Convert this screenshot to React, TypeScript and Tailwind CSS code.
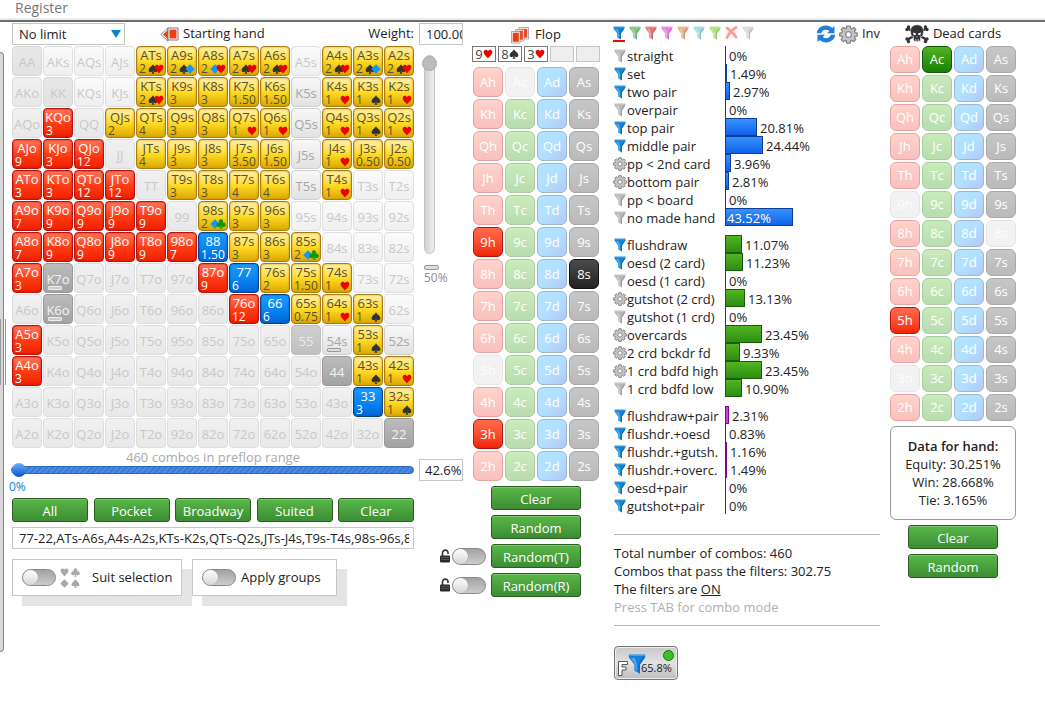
import { useState } from "react";
import type { ReactNode } from "react";

const ranks = "AKQJT98765432".split("");

// hand -> combos left, followed by the suits that are still allowed
const range: Record<string, string> = {
  ATs: "2 sh", A9s: "2 sd", A8s: "2 dh", A7s: "2 sh", A6s: "2 sh", A4s: "2 sh", A3s: "2 sd", A2s: "2 sh",
  KTs: "2 sh", K9s: "3", K8s: "3", K7s: "1.50", K6s: "1.50", K4s: "1 h", K3s: "1 s", K2s: "1 h",
  KQo: "3", QJs: "2", QTs: "4", Q9s: "3", Q8s: "3", Q7s: "1 h", Q6s: "1 h", Q4s: "1 h", Q3s: "1 s", Q2s: "1 h",
  AJo: "9", KJo: "3", QJo: "12", JTs: "4", J9s: "3", J8s: "3", J7s: "3.50", J6s: "1.50", J4s: "1 h", J3s: "0.50", J2s: "0.50",
  ATo: "3", KTo: "3", QTo: "12", JTo: "12", T9s: "3", T8s: "3", T7s: "4", T6s: "4", T4s: "1 h",
  A9o: "7", K9o: "9", Q9o: "9", J9o: "9", T9o: "9", "98s": "2 dc", "97s": "3", "96s": "3",
  A8o: "7", K8o: "9", Q8o: "9", J8o: "9", T8o: "9", "98o": "7", "88": "1.50", "87s": "3", "86s": "3", "85s": "2 dc",
  A7o: "3", "87o": "9", "77": "6", "76s": "2", "75s": "1.50", "74s": "1 h",
  "76o": "12", "66": "6", "65s": "0.75", "64s": "1 h", "63s": "1 s",
  A5o: "3", "53s": "1 s", A4o: "3", "43s": "1 s", "42s": "1 h", "33": "3", "32s": "1 s",
};

const muted = "border-[#dcdcdc] bg-linear-to-b from-[#f1f1f1] to-[#e8e8e8] text-[#c8c8c8]";
const mutedSuited = "border-[#dedede] bg-linear-to-b from-[#fbfbfb] to-[#efefef] text-[#c8c8c8]";
const mid = "border-[#cfcfcf] bg-linear-to-b from-[#f8f8f8] to-[#e2e2e2] text-[#a6a6a6]";
const dark = "border-[#999] bg-linear-to-b from-[#bcbcbc] to-[#a3a3a3] text-[#f4f4f4]";

const special: Record<string, string> = {
  AA: "border-[#d6d6d6] bg-linear-to-b from-[#e8e8e8] to-[#e2e2e2] text-[#c8c8c8]",
  KK: "border-[#d6d6d6] bg-linear-to-b from-[#e8e8e8] to-[#e2e2e2] text-[#c8c8c8]",
  A5s: mutedSuited, K5s: mid, Q5s: mid, J5s: mid, T5s: mid, "54s": mid, "52s": mid,
  K7o: dark, K6o: dark, "44": dark, "22": dark,
  "55": "border-[#bdbdbd] bg-linear-to-b from-[#cfcfcf] to-[#c0c0c0] text-[#ececec]",
};

const yellow =
  "border-[#a97c14] bg-linear-to-b from-[#fff0a4] via-[#ffdc22] to-[#dca800] text-[#55502e] shadow-[inset_0_0_2px_#c98f00]";
const red = "border-[#b51414] bg-linear-to-b from-[#ff7459] via-[#ff3c14] to-[#f01e00] text-white shadow-[inset_0_0_2px_#d01000]";
const blue = "border-[#06427f] bg-linear-to-b from-[#1a9cff] via-[#0b86f4] to-[#0066d6] text-white shadow-[inset_0_0_2px_#0050a8]";

const suitPaths: Record<string, string> = {
  h: "M8 15C6 12 1 9 1 4.800C1 2.500 2.500 1 4.500 1C6.200 1 7.500 2 8 3.500C8.500 2 9.800 1 11.500 1C13.500 1 15 2.500 15 4.800C15 9 10 12 8 15Z",
  s: "M8 .5C9.500 3.500 15 6.500 15 10C15 12 13.500 13 12 13C10.800 13 9.600 12.500 9 11.500C9 13.500 9.500 15 11 15.500H5C6.500 15 7 13.500 7 11.500C6.400 12.500 5.200 13 4 13C2.500 13 1 12 1 10C1 6.500 6.500 3.500 8 .5Z",
  d: "M8 .5L15.500 8L8 15.500L.5 8Z",
  c: "M8 .5A3.400 3.400 0 0 1 10.600 6.200A3.500 3.500 0 1 1 9 11C9 13.500 9.500 15 11 15.500H5C6.500 15 7 13.500 7 11A3.500 3.500 0 1 1 5.400 6.200A3.400 3.400 0 0 1 8 .5Z",
};
const suitColors: Record<string, string> = {
  h: "fill-[#ee0000]",
  s: "fill-[#333]",
  d: "fill-[#1496ff]",
  c: "fill-[#0a9a0a]",
};

const Suit = ({ suit, className }: { suit: string; className?: string }) => (
  <svg viewBox="0 0 16 16" className={className ?? `size-2.5 shrink-0 ${suitColors[suit]}`}>
    <path d={suitPaths[suit]} />
  </svg>
);

const Funnel = ({ color, className = "h-3.5 w-3" }: { color: string; className?: string }) => (
  <svg viewBox="0 0 12 14" className={`shrink-0 ${className} ${color}`}>
    <path fill="currentColor" d="M.5 .5H11.500V2.500L8 7.500V13.500L4.300 11.500V7.500L.5 2.500Z" />
    <path fill="#fff" fillOpacity=".3" d="M.5 .5H11.500V1.500H.5ZM2 3H4.500L6 7V11.500L5 11V7.500Z" />
    <path fill="#000" fillOpacity=".14" d="M9.500 2.500H11.500L8 7.500V13.500L7 13V7Z" />
  </svg>
);

const Gear = ({ className = "size-[14px]" }: { className?: string }) => (
  <svg viewBox="0 0 20 20" className={`shrink-0 ${className}`}>
    <path
      fill="#c4c4c4"
      stroke="#7c7c7c"
      strokeWidth="1.200"
      strokeLinejoin="round"
      d="M8.200 1H11.800L12.200 3.500L13.600 4.100L15.700 2.600L17.800 4.900L16.300 6.800L16.800 8L19.200 8.400V11.600L16.800 12L16.300 13.300L17.700 15.300L15.400 17.600L13.400 16.200L12.200 16.700L11.800 19.200H8.200L7.800 16.700L6.600 16.200L4.500 17.600L2.300 15.300L3.700 13.300L3.200 12L.8 11.600V8.400L3.200 8L3.700 6.700L2.300 4.700L4.600 2.400L6.600 3.900L7.800 3.500Z"
    />
    <circle cx="10" cy="10" r="3" fill="#fff" stroke="#8c8c8c" strokeWidth="1.400" />
  </svg>
);

const Lock = () => (
  <svg viewBox="0 0 12 14" className="h-3.5 w-3 shrink-0">
    <path d="M2.500 7V4.200A2.600 2.600 0 0 1 8 3.600V5" fill="none" stroke="#333" strokeWidth="1.600" />
    <rect x="0" y="6.500" width="10" height="7" rx="1" fill="#2b2b2b" />
    <path d="M1 8.500H9M1 10.500H9" stroke="#666" strokeWidth=".7" />
  </svg>
);

const Skull = () => (
  <svg viewBox="0 0 24 20" className="h-5 w-6" fill="#333">
    <path d="M2 4L22 16M22 4L2 16" stroke="#333" strokeWidth="2.400" />
    <circle cx="2" cy="5.500" r="1.700" /><circle cx="3.500" cy="3" r="1.700" />
    <circle cx="22" cy="5.500" r="1.700" /><circle cx="20.500" cy="3" r="1.700" />
    <circle cx="2" cy="15" r="1.700" /><circle cx="3.500" cy="17.500" r="1.700" />
    <circle cx="22" cy="15" r="1.700" /><circle cx="20.500" cy="17.500" r="1.700" />
    <path d="M12 .8C16.500 .8 18.800 4 18.500 7.800C18.400 9.800 17.800 11 17.500 12.500H15.500V16.500C14 17.800 10 17.800 8.500 16.500V12.500H6.500C6.200 11 5.600 9.800 5.500 7.800C5.200 4 7.500 .8 12 .8Z" stroke="#fff" strokeWidth=".5" />
    <path d="M8 8.500L10.800 9.300V11L8.700 11.200ZM16 8.500L13.200 9.300V11L15.300 11.200ZM12 12L12.700 13.300H11.300Z" fill="#fff" />
    <path d="M10.500 15V17M12 15V17M13.500 15V17" stroke="#fff" strokeWidth=".5" />
  </svg>
);

const GreenButton = ({ children, className }: { children: ReactNode; className: string }) => (
  <button
    type="button"
    className={`h-6 rounded-[3px] border border-[#2b5c20] bg-linear-to-b from-[#58b848] to-[#3c8c34] pt-px text-center leading-5 text-white shadow-[inset_0_1px_0_#7cc86c] ${className}`}
  >
    {children}
  </button>
);

const Toggle = ({ label }: { label: string }) => (
  <input
    type="checkbox"
    aria-label={label}
    className="h-[17px] w-[34px] shrink-0 appearance-none rounded-full border border-[#888] bg-linear-to-b from-[#a2a2a2] to-[#cdcdcd] before:block before:size-[15px] before:rounded-full before:bg-linear-to-b before:from-white before:to-[#d6d6d6] before:shadow-[0_0_1px_#777] checked:before:ml-[17px]"
  />
);

const HandCell = ({ row, col }: { row: number; col: number }) => {
  const pair = row === col;
  const suited = col > row;
  const name = ranks[Math.min(row, col)] + ranks[Math.max(row, col)] + (pair ? "" : suited ? "s" : "o");
  const entry = range[name];

  if (!entry) {
    const mark = name === "K7o" || name === "K6o" || name === "54s";
    return (
      <button
        type="button"
        className={`relative h-[30px] rounded-[4px] border pt-0.5 text-center leading-4 ${special[name] ?? (suited ? mutedSuited : muted)}`}
      >
        {name}
        {mark && (
          <span className={`absolute bottom-0.5 left-1 h-1 w-3.5 rounded-[1px] border ${name === "54s" ? "border-[#999] bg-[#ddd]" : "border-[#eee] bg-[#ccc]"}`} />
        )}
      </button>
    );
  }

  const [count, suits = ""] = entry.split(" ");
  return (
    <button type="button" className={`h-[30px] rounded-[4px] border ${pair ? blue : suited ? yellow : red}`}>
      <span className="block text-center leading-4">{name}</span>
      <span className="flex h-3 items-center justify-between pr-px pl-[2px] text-xs leading-3">
        {count}
        {suits && (
          <span className="flex -space-x-1">
            {suits.split("").map((s) => (
              <Suit key={s} suit={s} />
            ))}
          </span>
        )}
      </span>
    </button>
  );
};

const cardColors: Record<string, string> = {
  h: "border-[#eaa3a3] bg-linear-to-b from-[#ffd3cc] to-[#f8c0bc] text-white",
  c: "border-[#a5cfa0] bg-linear-to-b from-[#c9ebb9] to-[#b9dcb0] text-white",
  d: "border-[#9bb9d2] bg-linear-to-br from-[#b2e4ff] via-[#b2e0ff] to-[#b3c8f4] text-white",
  s: "border-[#a8a8a8] bg-linear-to-b from-[#c6c6c6] to-[#bababa] text-white",
};
const cardPicked: Record<string, string> = {
  h: "border-[#b51414] bg-linear-to-b from-[#ff6a4c] to-[#f42200] text-white",
  c: "border-[#125a08] bg-linear-to-b from-[#52b420] to-[#158004] text-white",
  d: "border-[#06427f] bg-linear-to-b from-[#1a9cff] to-[#0066d6] text-white",
  s: "border-[#111] bg-linear-to-b from-[#4c4c4c] to-[#222] text-white",
};

type CardGridProps = { picked: string[]; blocked: string[]; compact?: boolean };

const CardGrid = ({ picked, blocked, compact }: CardGridProps) => (
  <div className="grid grid-cols-4 gap-0.5">
    {ranks.flatMap((rank) =>
      ["h", "c", "d", "s"].map((suit) => {
        const card = rank + suit;
        const look = picked.includes(card)
          ? cardPicked[suit]
          : blocked.includes(card)
            ? "border-[#e6e6e6] bg-[#f2f2f2] text-[#fdfdfd]"
            : cardColors[suit];
        return (
          <button key={card} type="button" className={`rounded-md border pt-px text-center ${compact ? "h-[27px]" : "h-[30px]"} ${look}`}>
            {card}
          </button>
        );
      }),
    )}
  </div>
);

type Stat = { name: string; value: string; icon: "on" | "off" | "gear" };

const made: Stat[] = [
  { name: "straight", value: "0", icon: "off" },
  { name: "set", value: "1.49", icon: "on" },
  { name: "two pair", value: "2.97", icon: "on" },
  { name: "overpair", value: "0", icon: "off" },
  { name: "top pair", value: "20.81", icon: "on" },
  { name: "middle pair", value: "24.44", icon: "on" },
  { name: "pp < 2nd card", value: "3.96", icon: "gear" },
  { name: "bottom pair", value: "2.81", icon: "gear" },
  { name: "pp < board", value: "0", icon: "off" },
  { name: "no made hand", value: "43.52", icon: "off" },
];
const draws: Stat[] = [
  { name: "flushdraw", value: "11.07", icon: "on" },
  { name: "oesd (2 card)", value: "11.23", icon: "on" },
  { name: "oesd (1 card)", value: "0", icon: "off" },
  { name: "gutshot (2 crd)", value: "13.13", icon: "gear" },
  { name: "gutshot (1 crd)", value: "0", icon: "off" },
  { name: "overcards", value: "23.45", icon: "gear" },
  { name: "2 crd bckdr fd", value: "9.33", icon: "gear" },
  { name: "1 crd bdfd high", value: "23.45", icon: "gear" },
  { name: "1 crd bdfd low", value: "10.90", icon: "off" },
];
const combined: Stat[] = [
  { name: "flushdraw+pair", value: "2.31", icon: "on" },
  { name: "flushdr.+oesd", value: "0.83", icon: "on" },
  { name: "flushdr.+gutsh.", value: "1.16", icon: "on" },
  { name: "flushdr.+overc.", value: "1.49", icon: "on" },
  { name: "oesd+pair", value: "0", icon: "on" },
  { name: "gutshot+pair", value: "0", icon: "on" },
];

const StatGroup = ({ stats, bar }: { stats: Stat[]; bar: string }) => (
  <ul>
    {stats.map(({ name, value, icon }) => {
      const width = Math.max(1, Math.round(Number(value) * 1.56));
      const inside = Number(value) > 40;
      return (
        <li key={name} className="flex h-[18px] leading-5">
          <button type="button" className="flex w-[113px] shrink-0 text-left whitespace-nowrap">
            <span className="flex h-5 w-[15px] shrink-0 items-center justify-center">
              {icon === "gear" ? <Gear /> : <Funnel color={icon === "on" ? "text-[#0f86d8]" : "text-[#b8b8b8]"} />}
            </span>
            {name}
          </button>
          <span className={`h-[18px] ${bar}`} style={{ width }}>
            {inside && <span className="pl-[2px] text-white">{value}%</span>}
          </span>
          {!inside && <span className="pl-[3px]">{value}%</span>}
        </li>
      );
    })}
  </ul>
);

const filterColors = [
  "text-[#0f86d8]", "text-[#80c488]", "text-[#e07c80]", "text-[#e684e6]",
  "text-[#ebae84]", "text-[#9cdcdc]", "text-[#b4de78]",
];

const RangePanel = () => {
  const [weight, setWeight] = useState("100.00");
  const [text, setText] = useState("77-22,ATs-A6s,A4s-A2s,KTs-K2s,QTs-Q2s,JTs-J4s,T9s-T4s,98s-96s,87s-85s");

  return (
    <section className="flex shrink-0 gap-[5px]">
      <div className="w-[402px]">
        <div className="mb-px flex h-[22px] items-center">
          <div className="relative w-[113px]">
            <select aria-label="Limit" className="h-[22px] w-full appearance-none border border-[#c6c6c6] bg-white pl-1.5 leading-5">
              <option>No limit</option>
            </select>
            <svg viewBox="0 0 10 8" className="pointer-events-none absolute top-[7px] right-1 h-2 w-2.5 fill-[#0a84cc]">
              <path d="M0 0H10L5 8Z" />
            </svg>
          </div>
          <svg viewBox="0 0 19 15" className="mr-1 ml-[35px] h-[15px] w-[19px]">
            <path d="M.8 7.500L8 .8V14.200Z" fill="#fff" stroke="#888" />
            <path d="M2.800 7.500L8 2.800V12.200Z" fill="#f04418" />
            <path d="M8 1H18V13H8Z" fill="#fff" stroke="#777" />
            <path d="M9.500 2.500H16.500V11.500H9.500Z" fill="#f23c10" />
          </svg>
          <h2>Starting hand</h2>
          <label htmlFor="weight" className="ml-auto">Weight:</label>
        </div>

        <div className="grid grid-cols-13 gap-px">
          {ranks.flatMap((_, row) => ranks.map((_, col) => <HandCell key={`${row}-${col}`} row={row} col={col} />))}
        </div>

        <p className="mt-[3px] text-center leading-3 text-[#aaa]">460 combos in preflop range</p>
        <input
          type="range"
          aria-label="Preflop range"
          defaultValue={0}
          className="-ml-px block h-3.5 w-[403px] appearance-none bg-transparent [&::-webkit-slider-runnable-track]:h-2 [&::-webkit-slider-runnable-track]:rounded-sm [&::-webkit-slider-runnable-track]:border [&::-webkit-slider-runnable-track]:border-[#2867b8] [&::-webkit-slider-runnable-track]:bg-[repeating-linear-gradient(135deg,#3a7cda_0px,#3a7cda_2px,#5c98ea_3px,#3a7cda_4px)] [&::-webkit-slider-thumb]:-mt-1 [&::-webkit-slider-thumb]:size-3.5 [&::-webkit-slider-thumb]:appearance-none [&::-webkit-slider-thumb]:rounded-full [&::-webkit-slider-thumb]:bg-linear-to-b [&::-webkit-slider-thumb]:from-[#6ab0fa] [&::-webkit-slider-thumb]:to-[#0e50cc]"
        />
        <p className="mt-0.5 -ml-[3px] text-xs leading-4 text-[#0a84d0]">0%</p>

        <div className="mt-[3px] flex justify-between">
          {["All", "Pocket", "Broadway", "Suited", "Clear"].map((name) => (
            <GreenButton key={name} className="w-[76px]">{name}</GreenButton>
          ))}
        </div>
        <input
          aria-label="Range"
          value={text}
          onChange={(e) => setText(e.target.value)}
          className="mt-[5px] block h-[22px] w-full border border-[#c6c6c6] pr-1 pl-1.5"
        />

        <div className="mt-2.5 flex gap-2.5">
          <label className="flex h-[37px] w-[170px] items-center border border-[#c6c6c6] bg-white pl-[9px] shadow-[10px_10px_0_#e4e4e4]">
            <Toggle label="Suit selection" />
            <span className="mr-3 ml-1 grid grid-cols-2 gap-0.5">
              {["h", "c", "d", "s"].map((s) => (
                <Suit key={s} suit={s} className="size-[9px] fill-[#a8a8a8]" />
              ))}
            </span>
            Suit selection
          </label>
          <label className="flex h-[37px] w-[145px] items-center gap-[5px] border border-[#c6c6c6] bg-white pl-[9px] shadow-[10px_10px_0_#e4e4e4]">
            <Toggle label="Apply groups" />
            Apply groups
          </label>
        </div>
      </div>

      <div className="w-11">
        <input
          id="weight"
          value={weight}
          onChange={(e) => setWeight(e.target.value)}
          className="block h-[22px] w-full border border-[#c6c6c6] pl-1.5"
        />
        <input
          type="range"
          aria-label="Weight slider"
          defaultValue={100}
          className="mt-2.5 ml-[3px] block h-[199px] w-[15px] appearance-none bg-transparent [direction:rtl] [writing-mode:vertical-lr] [&::-webkit-slider-runnable-track]:w-[11px] [&::-webkit-slider-runnable-track]:rounded-md [&::-webkit-slider-runnable-track]:border [&::-webkit-slider-runnable-track]:border-[#c2c2c2] [&::-webkit-slider-runnable-track]:bg-linear-to-r [&::-webkit-slider-runnable-track]:from-[#d0d0d0] [&::-webkit-slider-runnable-track]:to-[#efefef] [&::-webkit-slider-thumb]:-ml-[3px] [&::-webkit-slider-thumb]:size-[15px] [&::-webkit-slider-thumb]:appearance-none [&::-webkit-slider-thumb]:rounded-full [&::-webkit-slider-thumb]:border [&::-webkit-slider-thumb]:border-[#aaa] [&::-webkit-slider-thumb]:bg-[#bcbcbc]"
        />
        <div className="mt-[11px] ml-[5px] h-[5px] w-[15px] rounded-xs border border-[#999] bg-[#ddd]" />
        <p className="ml-[5px] text-xs leading-4 text-[#8c8c8c]">50%</p>
        <input aria-label="Range percent" defaultValue="42.6%" className="mt-[173px] block h-[22px] w-full border border-[#c6c6c6] pl-[5px]" />
      </div>
    </section>
  );
};

const FlopPanel = () => (
  <section className="w-32 shrink-0">
    <div className="mb-px flex h-[22px] items-center justify-center gap-1.5 pt-0.5">
      <svg viewBox="0 0 18 17" className="h-[17px] w-[18px]" stroke="#888" strokeWidth=".7">
        <path d="M8 .5H17.500V12H8Z" fill="#fff" /><path d="M9.300 1.800H16.300V10.700H9.300Z" fill="#f04818" stroke="none" />
        <path d="M4.500 2.500H13V14H4.500Z" fill="#fff" /><path d="M5.600 3.700H11.900V12.800H5.600Z" fill="#f04818" stroke="none" />
        <path d="M.5 4.500H9V16H.5Z" fill="#fff" /><path d="M1.700 5.700H7.800V14.800H1.700Z" fill="#ee3c10" stroke="none" />
      </svg>
      <h2>Flop</h2>
    </div>
    <div className="mb-[5px] grid grid-cols-5 gap-0.5">
      {["9h", "8s", "3h"].map((card) => (
        <div key={card} className="flex h-4 items-center justify-center border border-[#777] leading-[14px] text-[#444]">
          {card[0]}
          <Suit suit={card[1]} />
        </div>
      ))}
      <div className="h-4 border border-[#c4c4c4] bg-[#eee]" />
      <div className="h-4 border border-[#c4c4c4] bg-[#eee]" />
    </div>
    <div className="px-px">
      <CardGrid picked={["9h", "8s", "3h"]} blocked={["Ac", "5h"]} />
    </div>
    <div className="mt-[5px] -ml-[33px] flex flex-col items-end gap-[5px] pr-[19px]">
      <GreenButton className="w-[90px]">Clear</GreenButton>
      <GreenButton className="w-[90px]">Random</GreenButton>
      {["Random(T)", "Random(R)"].map((name) => (
        <div key={name} className="flex items-center">
          <Lock />
          <Toggle label={`Lock ${name}`} />
          <GreenButton className="ml-[5px] w-[90px]">{name}</GreenButton>
        </div>
      ))}
    </div>
  </section>
);

const StatsPanel = () => (
  <section className="min-w-0 flex-1">
    <div className="mb-px flex h-[22px] items-center pl-px">
      {filterColors.map((color, i) => (
        <button key={color} type="button" aria-label={`Filter ${i + 1}`} className={`mr-1 w-3 border-b-2 ${i === 0 ? "border-[#f00]" : "border-transparent"}`}>
          <Funnel color={color} />
        </button>
      ))}
      <button type="button" aria-label="Remove filter" className="mr-1 w-[13px] pb-1">
        <svg viewBox="0 0 13 13" className="size-[13px]" fill="none" stroke="#ff9c8c" strokeWidth="2.800" strokeLinecap="round">
          <path d="M2 2Q7 5 11 11M11 1.500Q5 5 2 11.500" />
        </svg>
      </button>
      <button type="button" aria-label="Empty filter" className="w-3 border-b-2 border-transparent">
        <Funnel color="text-[#d8d8d8]" />
      </button>
      <button type="button" aria-label="Refresh" className="ml-auto">
        <svg viewBox="0 0 20 18" className="h-[18px] w-5" fill="#1f7fdc">
          <path d="M.8 8.200C1.200 3.500 5.500 .6 9.500 .6C12.500 .6 14.800 1.600 16.200 3L18.500 1V8.200H11L13.300 5.900C10.500 3.800 6.500 4.500 5 8.200Z" />
          <path d="M19.200 9.800C18.800 14.500 14.500 17.400 10.500 17.400C7.500 17.400 5.200 16.400 3.800 15L1.500 17V9.800H9L6.700 12.100C9.500 14.200 13.500 13.500 15 9.800Z" />
        </svg>
      </button>
      <button type="button" aria-label="Settings" className="mr-1 ml-[3px]">
        <Gear className="size-[19px]" />
      </button>
      <button type="button">Inv</button>
    </div>

    <div className="flex flex-col gap-[9px]">
      <StatGroup stats={made} bar="bg-linear-to-b from-[#3a94ff] to-[#0c5fe8] shadow-[inset_0_0_0_1px_#0a3f94]" />
      <StatGroup stats={draws} bar="bg-linear-to-b from-[#52b822] to-[#2a8c10] shadow-[inset_0_0_0_1px_#1b5c0a]" />
      <StatGroup stats={combined} bar="bg-[#d040e0] shadow-[inset_0_0_0_1px_#7a0a8c]" />
    </div>

    <div className="mt-5 ml-0.5 border-y border-[#b8b8b8] py-[9px] leading-[18px]">
      <p>Total number of combos: 460</p>
      <p>Combos that pass the filters: 302.75</p>
      <p>The filters are <span className="underline">ON</span></p>
      <p className="text-[#b0b0b0]">Press TAB for combo mode</p>
    </div>

    <button
      type="button"
      className="relative mt-5 ml-0.5 flex h-[34px] w-16 items-end rounded-[4px] border border-[#777] bg-linear-to-b from-[#c8c8c8] via-[#e2e2e2] to-[#bcbcbc] pb-[3px] pl-[3px] text-[11px] shadow-[inset_0_0_0_1px_#eee]"
    >
      <svg viewBox="0 0 10 15" className="h-[15px] w-2.5" fill="#fff" stroke="#555">
        <path d="M.5 .5H9.500V3.500H4V6H8V9H4V14.500H.5Z" />
      </svg>
      <Funnel color="text-[#1180e0]" className="h-6 w-[18px]" />
      <span className="-ml-[5px] leading-4">65.8%</span>
      <span className="absolute top-[3px] right-[3px] size-[11px] rounded-full border border-[#187010] bg-[#3cc028]" />
    </button>
  </section>
);

const DeadPanel = () => (
  <section className="w-[126px] shrink-0">
    <div className="mb-px flex h-[22px] items-center justify-center gap-1">
      <Skull />
      <h2>Dead cards</h2>
    </div>
    <CardGrid compact picked={["Ac", "5h"]} blocked={["9h", "8s", "3h"]} />
    <div className="mt-[5px] rounded-md border border-[#999] py-2.5 text-center leading-[18px]">
      <h3 className="font-semibold">Data for hand:</h3>
      <p>Equity: 30.251%</p>
      <p>Win: 28.668%</p>
      <p>Tie: 3.165%</p>
    </div>
    <div className="mt-[5px] flex flex-col items-center gap-[5px]">
      <GreenButton className="w-[90px]">Clear</GreenButton>
      <GreenButton className="w-[90px]">Random</GreenButton>
    </div>
  </section>
);

const App = () => (
  <div className="min-h-screen bg-white font-['Open_Sans','Noto_Sans',sans-serif] text-[13px] text-[#222]">
    <header className="border-b-2 border-[#6c6c6c]">
      <nav className="h-5 border-b-2 border-[#ececec] pl-[15px] text-sm leading-4 text-[#777]">
        <a href="#register">Register</a>
      </nav>
    </header>
    <main className="flex items-start pt-px pr-[29px]">
      <aside className="relative mt-[29px] mr-2 h-[600px] w-1 shrink-0 rounded-r-md border-y border-r border-[#888] bg-[#d8d8d8]">
        <span className="absolute top-[266px] left-0 h-[66px] w-1.5 border-x border-[#999]" />
      </aside>
      <RangePanel />
      <div className="ml-[9px] flex min-w-0 flex-1 items-start">
        <FlopPanel />
        <div className="ml-3 flex min-w-0 flex-1 items-start gap-2.5">
          <StatsPanel />
          <DeadPanel />
        </div>
      </div>
    </main>
  </div>
);

export default App;
